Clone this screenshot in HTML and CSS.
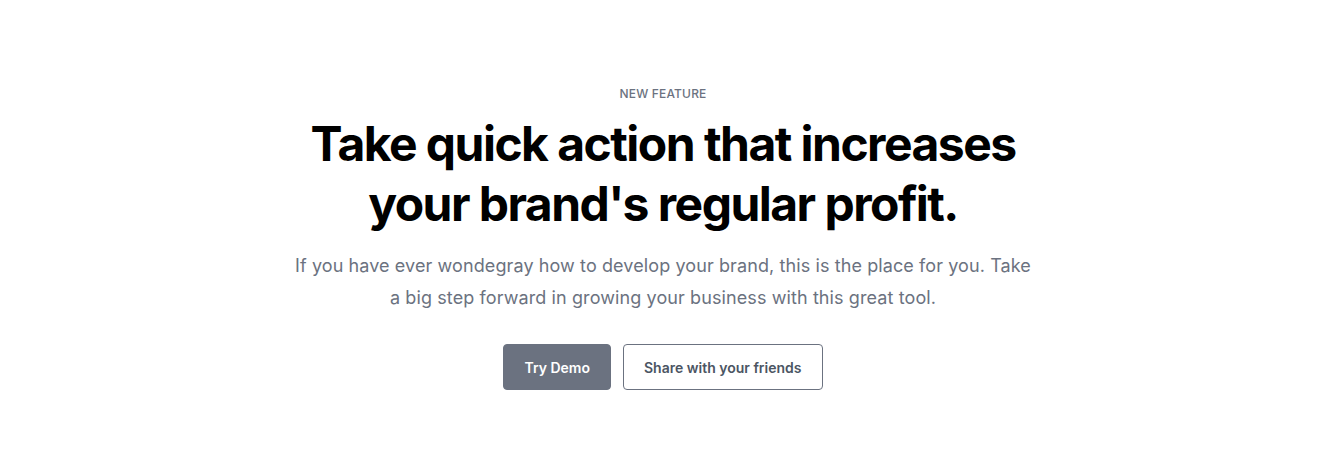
FILE: index.html
```html
<!DOCTYPE html>
<html lang="en">
<head>
<meta charset="utf-8">
<title>New Feature</title>
<link rel="stylesheet" href="styles.css">
</head>
<body>
<section class="hero">
  <p class="eyebrow">NEW FEATURE</p>
  <h1 class="title">Take quick action that increases your brand's regular profit.</h1>
  <p class="lead">If you have ever wondegray how to develop your brand, this is the place for you. Take a big step forward in growing your business with this great tool.</p>
  <div class="actions">
    <a class="btn btn-primary" href="#">Try Demo</a>
    <a class="btn btn-outline" href="#">Share with your friends</a>
  </div>
</section>
</body>
</html>
```

FILE: styles.css
```css
* { box-sizing: border-box; }
html, body { margin: 0; padding: 0; background: #fff; }
body { font-family: Inter, "Noto Sans", sans-serif; color: #000; }
.hero {
  display: flex;
  flex-direction: column;
  align-items: center;
  text-align: center;
  padding-top: 86px;
}
.eyebrow {
  margin: 0;
  font-size: 12px;
  line-height: 16px;
  font-weight: 500;
  color: #6b7280;
  letter-spacing: 0.015em;
}
.title {
  margin: 12px 0 0;
  max-width: 740px;
  font-size: 48px;
  line-height: 60px;
  font-weight: 700;
  color: #000;
  letter-spacing: -0.032em;
}
.lead {
  margin: 16px 0 0;
  max-width: 745px;
  font-size: 18px;
  line-height: 32px;
  color: #6b7280;
  letter-spacing: 0.1px;
}
.actions {
  display: flex;
  gap: 12px;
  margin-top: 30px;
}
.btn {
  display: inline-flex;
  align-items: center;
  justify-content: center;
  height: 46px;
  padding: 0 20px;
  border-radius: 4px;
  font-size: 14px;
  font-weight: 600;
  text-decoration: none;
}
.btn-primary {
  background: #6b7280;
  color: #fff;
  border: 1px solid #6b7280;
}
.btn-outline {
  background: #fff;
  color: #4b5563;
  border: 1px solid #6b7280;
}
```
